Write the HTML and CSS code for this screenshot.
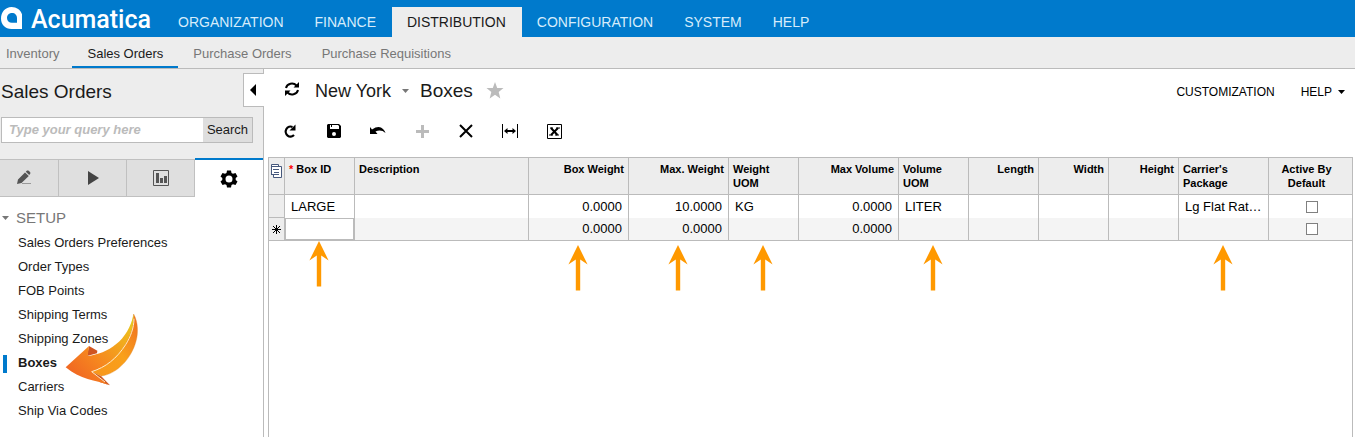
FILE: index.html
```html
<!DOCTYPE html>
<html lang="en">
<head>
<meta charset="utf-8">
<title>Boxes</title>
<link rel="stylesheet" href="styles.css">
</head>
<body>
<svg class="defs" width="0" height="0" aria-hidden="true">
  <symbol id="pointer" viewBox="0 0 20 46"><path d="M10 0L19.600 19.500L12.200 14.500V45.500H7.800V14.500L.400 19.500Z" fill="#ff9900"/></symbol>
</svg>
<header class="topbar">
  <a class="logo" href="#">
    <svg width="22" height="23" viewBox="0 0 22 23"><path fill="#fff" fill-rule="evenodd" d="M11.500 0C17.800 0 22.500 4.500 22.500 10.500V22H11.500C5.200 22 1 17.500 1 11.500C1 5 5.500 0 11.500 0ZM12 6C8.800 6 7 8.300 7 11C7 13.900 9 15.800 12 15.800H17V11.300C17 8 15 6 12 6Z"/></svg>
    <span>Acumatica</span>
  </a>
  <nav class="modules">
    <a href="#">ORGANIZATION</a>
    <a href="#">FINANCE</a>
    <a href="#" class="current">DISTRIBUTION</a>
    <a href="#">CONFIGURATION</a>
    <a href="#">SYSTEM</a>
    <a href="#">HELP</a>
  </nav>
</header>
<nav class="subnav">
  <a href="#">Inventory</a>
  <a href="#" class="current">Sales Orders</a>
  <a href="#">Purchase Orders</a>
  <a href="#">Purchase Requisitions</a>
</nav>
<div class="workspace">
  <aside class="sidebar">
    <button class="collapse" type="button" aria-label="Collapse"><svg width="6" height="12"><path d="M6 0V12L0 6Z"/></svg></button>
    <div class="side-head">
      <h1>Sales Orders</h1>
      <form class="search">
        <input type="text" placeholder="Type your query here" aria-label="Search query">
        <button type="button">Search</button>
      </form>
    </div>
    <div class="tabs">
      <button type="button" class="first" aria-label="Entry"><svg width="16" height="16" viewBox="0 0 16 16" fill="#555"><path d="M1 14L2 9.500L9 2.500L12.800 6L5.500 13ZM9.800 1.700L11 .600Q12 .100 12.800.800L14.200 2.200Q14.700 3 14.200 3.800L13.200 5Z"/><path d="M6 13.500H15" stroke="#999"/></svg></button>
      <button type="button" aria-label="Processing"><svg width="12" height="16"><path d="M1 1V15L12 8Z" fill="#444"/></svg></button>
      <button type="button" aria-label="Reports"><svg width="16" height="16" fill="#555"><path d="M.500.500H15.500V15.500H.500Z" fill="none" stroke="#555"/><path d="M3 3H6V13H3ZM7 8H10V13H7ZM11 6H14V13H11Z"/></svg></button>
      <button type="button" class="current" aria-label="Setup"><svg width="18" height="18" viewBox="0 0 18 18"><path fill-rule="evenodd" d="M7 .500H11L11.500 3L13 3.800L15.500 3L17.500 6.400L15.700 8V10L17.500 11.600L15.500 15L13 14.200L11.500 15L11 17.500H7L6.500 15L5 14.200L2.500 15L.500 11.600L2.300 10V8L.500 6.400L2.500 3L5 3.800L6.500 3ZM9 5.500A3.500 3.500 0 1 0 9 12.500A3.500 3.500 0 1 0 9 5.500Z"/></svg></button>
    </div>
    <div class="menu">
      <h2><svg width="7" height="4"><path d="M0 0H7L3.500 4Z" fill="#777"/></svg>SETUP</h2>
      <a href="#">Sales Orders Preferences</a>
      <a href="#">Order Types</a>
      <a href="#">FOB Points</a>
      <a href="#">Shipping Terms</a>
      <a href="#">Shipping Zones</a>
      <a href="#" class="current">Boxes
        <svg class="swoosh" width="77" height="75" viewBox="190 64 231 225">
          <defs>
            <linearGradient id="body" x1="0" y1="1" x2="1" y2="0"><stop offset="0" stop-color="#ee5a24"/><stop offset=".4" stop-color="#f6861f"/><stop offset=".8" stop-color="#f0b41c"/><stop offset="1" stop-color="#e0d020"/></linearGradient>
            <linearGradient id="edge" x1="0" y1="1" x2="1" y2="0"><stop offset="0" stop-color="#f8961c"/><stop offset=".5" stop-color="#f9a01a"/><stop offset="1" stop-color="#ef6c22"/></linearGradient>
          </defs>
          <path d="M268 166L293 180L292 188L262 196Z" fill="#cf5520"/>
          <path d="M276 242L304 256L331 284L300 274Z" fill="#cf5a25"/>
          <path d="M402 70C416 96 416 128 409 152C395 204 352 250 305 256L276 243C340 220 391 165 402 70Z" fill="url(#edge)" stroke="#d9822c"/>
          <path d="M198 230L268 166L264 196C325 189 386 150 402 70C403 108 392 135 378 158C351 203 318 228 276 243L325 282C290 270 240 266 198 230Z" fill="url(#body)"/>
          <path d="M403 84C403 112 392 140 378 162C351 204 318 230 276 243L316 274" fill="none" stroke="#ffe9c4" stroke-width="3"/>
        </svg>
      </a>
      <a href="#">Carriers</a>
      <a href="#">Ship Via Codes</a>
    </div>
  </aside>
  <main>
    <div class="title-row">
      <button type="button" class="sync" aria-label="Refresh"><svg width="16" height="16" viewBox="0 0 16 16" fill="none" stroke="#000" stroke-width="2"><path d="M2 7A6 5.500 0 0 1 12.500 4.500M14 9A6 5.500 0 0 1 3.500 11.500"/><path d="M15 1V6.500H9.500ZM1 15V9.500H6.500Z" fill="#000" stroke="none"/></svg></button>
      <button type="button" class="branch">New York <svg width="7" height="4"><path d="M0 0H7L3.500 4Z" fill="#777"/></svg></button>
      <h2>Boxes</h2>
      <button type="button" class="star" aria-label="Favorite"><svg width="18" height="17" viewBox="0 0 18 17"><path d="M9 0L11.200 6H17.500L12.700 10L14.300 16.500L9 12.800L3.700 16.500L5.300 10L.500 6H6.800Z" fill="#bbb"/></svg></button>
      <div class="links"><a href="#">CUSTOMIZATION</a><a href="#">HELP <svg width="7" height="4"><path d="M0 0H7L3.500 4Z"/></svg></a></div>
    </div>
    <div class="toolbar">
      <button type="button" aria-label="Reload"><svg width="14" height="14" viewBox="0 0 14 14"><path d="M9.500 3A4.800 5 0 1 0 11 11" fill="none" stroke="#000" stroke-width="2.200"/><path d="M12.500.500V6.500H6.500Z"/></svg></button>
      <button type="button" aria-label="Save"><svg width="14" height="14" viewBox="0 0 14 14"><path fill-rule="evenodd" d="M1 0H12L14 2V13L13 14H1L0 13V1ZM3 1V5H12V2L11 1H5V3H4V1ZM7 8A2 2 0 1 0 7 12A2 2 0 1 0 7 8Z"/></svg></button>
      <button type="button" aria-label="Undo"><svg width="16" height="12" viewBox="0 0 16 12"><path d="M0 2L2 4.500Q9 0 13 4Q15 6 15.500 8Q11 4 5.500 6.500L7.500 9H0Z"/></svg></button>
      <button type="button" aria-label="Add"><svg width="13" height="13"><path d="M6.500 0V13M0 6.500H13" stroke="#bbb" stroke-width="3"/></svg></button>
      <button type="button" aria-label="Delete"><svg width="14" height="14"><path d="M1 1L13 13M13 1L1 13" stroke="#000" stroke-width="2"/></svg></button>
      <button type="button" aria-label="Fit width"><svg width="16" height="15"><path d="M.500 0V14M15.500 0V14" stroke="#000"/><path d="M4 7H12" stroke="#000" stroke-width="2"/><path d="M2 7L5.500 4V10ZM14 7L10.500 4V10Z"/></svg></button>
      <button type="button" aria-label="Export"><svg width="15" height="15"><path d="M.500.500H14.500V14.500H.500Z" fill="none" stroke="#000"/><path d="M3 4H6M9 4H13M2 11H6M8 11H12" stroke="#000"/><path d="M4 4L10.500 11M11 4L4 11" stroke="#000" stroke-width="2"/></svg></button>
    </div>
    <div class="grid">
      <table>
        <colgroup><col class="w-mark"><col class="w-70"><col><col class="w-100"><col class="w-100"><col class="w-70"><col class="w-100"><col class="w-70"><col class="w-70"><col class="w-70"><col class="w-70"><col class="w-90"><col class="w-last"></colgroup>
        <thead>
          <tr>
            <th class="mark"><svg width="11" height="14" viewBox="0 0 11 14" fill="#fff" stroke="#46587c"><path d="M.500 9.500V.500H7.500V2.500"/><path d="M0 2.500H10.500V13.500H2.500V10.500H.500V2.500M2 5.500H8M3 8.500H8M0 10.500H8"/></svg></th>
            <th><span class="required">*</span> Box ID</th><th>Description</th><th class="num">Box Weight</th><th class="num">Max. Weight</th><th>Weight UOM</th><th class="num">Max Volume</th><th>Volume UOM</th><th class="num">Length</th><th class="num">Width</th><th class="num">Height</th><th>Carrier's Package</th><th class="mid">Active By Default</th>
          </tr>
        </thead>
        <tbody>
          <tr>
            <td class="mark"></td><td>LARGE</td><td></td><td class="num">0.0000</td><td class="num">10.0000</td><td>KG</td><td class="num">0.0000</td><td>LITER</td><td></td><td></td><td></td><td class="clip">Lg Flat Rat…</td><td class="mid"><input type="checkbox" aria-label="Active by default"></td>
          </tr>
          <tr class="new">
            <td class="mark"><svg width="9" height="9" stroke="#000"><path d="M4.500 0V9M0 4.500H9M1 1L8 8M8 1L1 8"/></svg></td>
            <td class="edit"><input type="text" aria-label="Box ID"><svg class="arrow near"><use href="#pointer"/></svg></td>
            <td></td>
            <td class="num">0.0000<svg class="arrow"><use href="#pointer"/></svg></td>
            <td class="num">0.0000<svg class="arrow"><use href="#pointer"/></svg></td>
            <td><svg class="arrow"><use href="#pointer"/></svg></td>
            <td class="num">0.0000</td>
            <td><svg class="arrow"><use href="#pointer"/></svg></td>
            <td></td><td></td><td></td>
            <td><svg class="arrow"><use href="#pointer"/></svg></td>
            <td class="mid"><input type="checkbox" aria-label="Active by default"></td>
          </tr>
        </tbody>
      </table>
    </div>
  </main>
</div>
</body>
</html>
```
FILE: styles.css
```css
* { box-sizing: border-box; }
body {
  margin: 0;
  min-height: 100vh;
  display: flex;
  flex-direction: column;
  background: #fff;
  color: #1a1a1a;
  font: 13px/16px "Liberation Sans", Arial, sans-serif;
}
.defs { position: absolute; }
a { color: inherit; text-decoration: none; }
button { margin: 0; padding: 0; border: 0; background: none; color: inherit; font: inherit; }
svg { display: block; }
h1, h2 { margin: 0; font-weight: 400; }

.topbar { display: flex; height: 37px; background: #007acc; color: #fff; }
.logo { display: flex; gap: 9px; padding-top: 7px; width: 163px; font: 500 25px/26px Roboto, sans-serif; }
.modules { display: flex; align-items: stretch; padding-top: 7px; font-size: 14px; line-height: 30px; color: #d6ecfb; }
.modules a { padding: 0 16px 0 15px; }
.modules .current { background: #ededed; color: #1a1a1a; }

.subnav { display: flex; height: 32px; background: #ededed; border-bottom: 1px solid #bbb; color: #777; line-height: 33px; }
.subnav a { padding: 0 15px; height: 31px; }
.subnav a:first-child { padding: 0 13px 0 6px; }
.subnav .current { color: #1a1a1a; border-bottom: 2px solid #007acc; }

.workspace { flex: 1; display: flex; }
.sidebar { position: relative; width: 264px; flex: none; border-right: 1px solid #bbb; }
.collapse { position: absolute; top: 4px; right: -1px; width: 21px; height: 34px; border: 1px solid #bbb; border-right: 0; background: #fff; padding-left: 6px; }
.side-head { background: #ededed; padding: 11px 10px 15px 1px; }
.side-head h1 { font-size: 19px; line-height: 24px; margin-bottom: 13px; }
.search { display: flex; height: 26px; border: 1px solid #bbb; background: #fff; }
.search input { flex: 1; min-width: 0; border: 0; padding: 0 7px; background: none; font: italic 700 13px/24px "Liberation Sans", Arial, sans-serif; outline: 0; }
.search input::placeholder { color: #bbb; opacity: 1; }
.search button { width: 49px; background: #dedede; }
.tabs { display: grid; grid-template-columns: 59px repeat(3, 1fr); height: 39px; background: #ededed; }
.tabs button { display: grid; place-items: center; background: #dfdfdf; border: 1px solid #c0c0c0; border-left: 0; margin-top: 1px; }
.tabs .first { padding-right: 10px; }
.tabs .current { margin-top: 0; border: 0; border-top: 2px solid #007acc; background: #fff; }
.menu { padding-top: 10px; }
.menu h2 { display: flex; align-items: center; gap: 7px; padding-left: 2px; font-size: 15px; line-height: 22px; margin-bottom: 2px; color: #777; }
.menu a { display: block; position: relative; padding-left: 18px; line-height: 24px; }
.menu .current { font-weight: 700; }
.menu .current::before { content: ""; position: absolute; left: 3px; top: 4px; width: 4px; height: 18px; background: #007acc; }
.swoosh { position: absolute; left: 63px; top: -39px; z-index: 1; }

main { flex: 1; min-width: 0; display: flex; flex-direction: column; padding: 0 2px 0 4px; }
.title-row { display: flex; align-items: center; padding: 9px 8px 0 16px; height: 34px; }
.sync { margin-right: 15px; margin-bottom: 4px; }
.branch { display: flex; align-items: center; gap: 11px; font-size: 18px; line-height: 24px; margin-right: 11px; }
.title-row h2 { font-size: 19px; line-height: 24px; margin-right: 13px; }
.links { margin-left: auto; padding-top: 2px; display: flex; gap: 26px; font-size: 12px; color: #000; }
.links a { display: flex; align-items: center; gap: 6px; }
.toolbar { display: flex; padding-top: 14px; height: 54px; }
.toolbar button { display: grid; place-items: center; width: 44px; height: 28px; }

.grid { flex: 1; border: 1px solid #bbb; border-bottom: 0; color: #000; }
table { width: 100%; table-layout: fixed; border-collapse: separate; border-spacing: 0; }
.w-mark { width: 16px; }
.w-70 { width: 70px; }
.w-90 { width: 90px; }
.w-100 { width: 100px; }
.w-last { width: 83px; }
th, td { border: 0 solid #bbb; border-right-width: 1px; text-align: left; }
th:last-child, td:last-child { border-right-width: 0; }
th { height: 37px; padding: 4px; background: #ededed; border-bottom-width: 1px; font: 700 11px/14px "Liberation Sans", Arial, sans-serif; vertical-align: top; }
td { position: relative; height: 23px; padding: 0 6px; line-height: 22px; }
.num { text-align: right; }
.mid { text-align: center; }
th.mid { padding-right: 12px; }
td.mid { padding: 0 3px 0 6px; }
.required { color: #f00; }
.clip { overflow: hidden; white-space: nowrap; text-overflow: ellipsis; }
.mark { padding: 0 3px; background: #ededed; border-bottom-width: 1px; vertical-align: middle; }
th.mark { padding: 6px 2px 0; vertical-align: top; }
.new td { background: #f4f4f4; border-bottom-width: 1px; }
.new .mark { background: #ededed; }
.new .edit { padding: 0; }
.edit input { display: block; width: 100%; height: 22px; border: 1px solid #bbb; background: #fff; padding: 0 5px; font: inherit; outline: 0; }
input[type="checkbox"] { appearance: none; display: block; width: 12px; height: 12px; margin: 0 auto; border: 1px solid #808080; background: #fff; }
.arrow { position: absolute; z-index: 1; left: 50%; top: 100%; width: 20px; height: 46px; margin: 5px 0 0 -11px; }
.arrow.near { margin-top: 1px; }
```
